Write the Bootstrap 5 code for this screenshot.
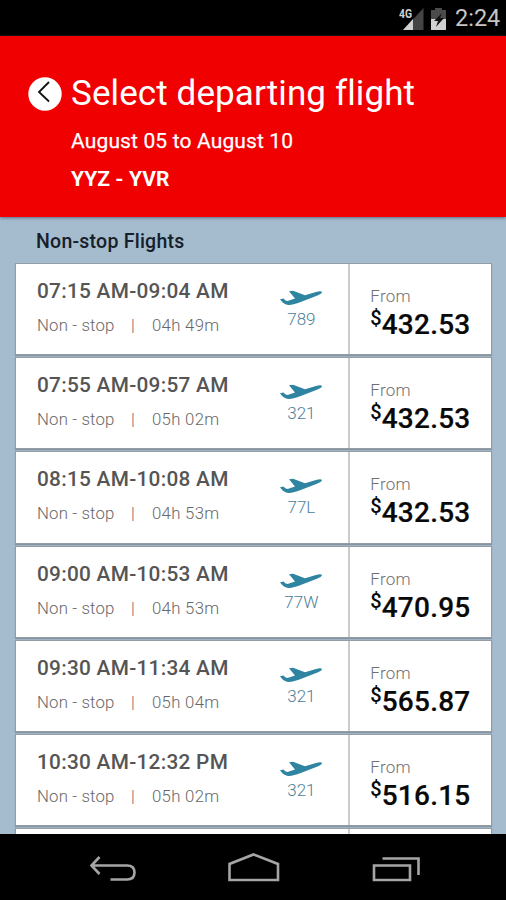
<!DOCTYPE html>
<html lang="en">
<head>
<meta charset="utf-8">
<meta name="viewport" content="width=device-width, initial-scale=1">
<title>Select departing flight</title>
<link href="https://cdn.jsdelivr.net/npm/bootstrap@5.3.0/dist/css/bootstrap.min.css" rel="stylesheet">
<style>
body{font-family:Roboto,"Liberation Sans",sans-serif;background:#a5bbce;width:506px;height:900px;overflow:hidden;line-height:1}
.status-bar{height:36px;background:#000;color:#c6c6c6;font-size:23.5px;padding:1px 8px 0 0}
.clock{width:43px;white-space:nowrap}
.app-head{height:181px;background:#f00000;box-shadow:0 1px 3px #5e6b80;padding:38px 0 0 28px;position:relative}
.back-btn{width:34px;height:34px;padding:0;border:0;background:none;margin:3px 9px 0 0}
.head-title{font-size:35px;line-height:40px;font-weight:400;margin:0;white-space:nowrap;letter-spacing:.1px}
.head-copy{padding-left:43px}
.head-dates{font-size:21px;line-height:24px;margin-top:15px;letter-spacing:.14px;-webkit-text-stroke:.25px #fff}
.head-route{font-size:21px;line-height:24px;margin-top:14px;font-weight:700;letter-spacing:.05px}
.results{height:617px;overflow:hidden;padding:0 14px 0 15px}
.group-name{font-size:19.5px;font-weight:500;color:#15202a;line-height:24px;padding:13px 0 0 21px;margin:0 0 9px;letter-spacing:.24px}
.flight{height:92.2px;margin-bottom:2px;border:1px solid #959da4;border-bottom-width:1.5px;border-radius:0;background:#fff;box-shadow:0 1px 1px #8693a0}
.times{font-size:20.8px;font-weight:500;color:#555;line-height:24px;padding-top:15px;white-space:nowrap;letter-spacing:.28px}
.stops{font-size:16.8px;color:#686868;line-height:20px;padding-top:12px;font-weight:300;white-space:nowrap;letter-spacing:.3px}
.kind{width:94px;letter-spacing:.15px}
.sep{width:21px}
.main-col{width:225px;padding-left:21px}
.plane-col{width:108px;padding-top:26px;color:#4d8199;font-size:17px;font-weight:300}
.plane-col span{line-height:18px;margin-left:14px;margin-top:4px}
.plane-col svg{margin-left:14px}
.fare-col{border-left:2px solid #c9cbcd;padding:22px 0 0 20px;width:143px}
.from{font-size:17px;line-height:20px;color:#707070;font-weight:300;letter-spacing:.3px}
.fare{font-size:28px;line-height:30px;font-weight:500;color:#090909;margin-top:4px;white-space:nowrap}
.amount{letter-spacing:.25px;-webkit-text-stroke:.2px #090909}
.fare .cur{font-size:20px;line-height:20px;margin-top:-2px}
.nav-keys{height:66px;background:#000}
.nav-keys svg{display:block}
</style>
<script src="https://cdn.jsdelivr.net/npm/bootstrap@5.3.0/dist/js/bootstrap.bundle.min.js"></script>
</head>
<body class="d-flex flex-column">
<svg class="d-none">
<symbol id="plane" viewBox="0 0 42 16"><path fill="#2f84a1" d="M0 9.2 3.500 8.500Q5 10.800 7.500 11L15 8.600 9 1.200 13 .8 25 5.300 36 2Q41 .7 42 2 42 3.600 37.500 5.600L22 11.500Q12 15.600 7 14.800 3 13.800 0 9.200Z"/></symbol>
</svg>
<div class="status-bar d-flex align-items-center justify-content-end flex-shrink-0">
<svg width="56" height="30" viewBox="0 0 56 30"><path fill="#444" d="M24.500 4v22H4Z"/><path fill="#d0d0d0" d="M14 15v11H4Z"/><text x="0" y="13.500" font-size="12" font-weight="700" fill="#d0d0d0" stroke="#000" stroke-width="2" paint-order="stroke" textLength="13" lengthAdjust="spacingAndGlyphs">4G</text><path fill="#4b4b4b" d="M32 6h4V4h7v2h4v10H32Z"/><path fill="#d0d0d0" d="M32 15h15v11H32Z"/><path fill="#111" d="m43 9-8 8h4l-2 6 8-9h-4l2-5Z"/></svg>
<span class="clock">2:24</span>
</div>
<header class="app-head text-white flex-shrink-0">
<div class="d-flex"><button class="back-btn" aria-label="Back"><svg class="d-block" width="34" height="34"><circle cx="17" cy="17" r="16.7" fill="#fff"/><path d="m21 5-10 10 10 9.5" fill="none" stroke="#111" stroke-width="1.8"/></svg></button><h1 class="head-title">Select departing flight</h1></div>
<div class="head-copy"><div class="head-dates">August 05 to August 10</div><div class="head-route">YYZ - YVR</div></div>
</header>
<main class="results flex-shrink-0">
<h2 class="group-name">Non-stop Flights</h2>
<div class="flight d-flex"><div class="main-col"><div class="times">07:15 AM-09:04 AM</div><div class="stops d-flex"><span class="kind">Non - stop</span><span class="sep">|</span><span class="dur">04h 49m</span></div></div><div class="plane-col d-flex flex-column align-items-center"><svg width="42" height="16"><use href="#plane"/></svg><span>789</span></div><div class="fare-col"><div class="from">From</div><div class="fare d-flex"><span class="cur">$</span><span class="amount">432.53</span></div></div></div>
<div class="flight d-flex"><div class="main-col"><div class="times">07:55 AM-09:57 AM</div><div class="stops d-flex"><span class="kind">Non - stop</span><span class="sep">|</span><span class="dur">05h 02m</span></div></div><div class="plane-col d-flex flex-column align-items-center"><svg width="42" height="16"><use href="#plane"/></svg><span>321</span></div><div class="fare-col"><div class="from">From</div><div class="fare d-flex"><span class="cur">$</span><span class="amount">432.53</span></div></div></div>
<div class="flight d-flex"><div class="main-col"><div class="times">08:15 AM-10:08 AM</div><div class="stops d-flex"><span class="kind">Non - stop</span><span class="sep">|</span><span class="dur">04h 53m</span></div></div><div class="plane-col d-flex flex-column align-items-center"><svg width="42" height="16"><use href="#plane"/></svg><span>77L</span></div><div class="fare-col"><div class="from">From</div><div class="fare d-flex"><span class="cur">$</span><span class="amount">432.53</span></div></div></div>
<div class="flight d-flex"><div class="main-col"><div class="times">09:00 AM-10:53 AM</div><div class="stops d-flex"><span class="kind">Non - stop</span><span class="sep">|</span><span class="dur">04h 53m</span></div></div><div class="plane-col d-flex flex-column align-items-center"><svg width="42" height="16"><use href="#plane"/></svg><span>77W</span></div><div class="fare-col"><div class="from">From</div><div class="fare d-flex"><span class="cur">$</span><span class="amount">470.95</span></div></div></div>
<div class="flight d-flex"><div class="main-col"><div class="times">09:30 AM-11:34 AM</div><div class="stops d-flex"><span class="kind">Non - stop</span><span class="sep">|</span><span class="dur">05h 04m</span></div></div><div class="plane-col d-flex flex-column align-items-center"><svg width="42" height="16"><use href="#plane"/></svg><span>321</span></div><div class="fare-col"><div class="from">From</div><div class="fare d-flex"><span class="cur">$</span><span class="amount">565.87</span></div></div></div>
<div class="flight d-flex"><div class="main-col"><div class="times">10:30 AM-12:32 PM</div><div class="stops d-flex"><span class="kind">Non - stop</span><span class="sep">|</span><span class="dur">05h 02m</span></div></div><div class="plane-col d-flex flex-column align-items-center"><svg width="42" height="16"><use href="#plane"/></svg><span>321</span></div><div class="fare-col"><div class="from">From</div><div class="fare d-flex"><span class="cur">$</span><span class="amount">516.15</span></div></div></div>
<div class="flight d-flex"><div class="main-col"></div><div class="plane-col"></div><div class="fare-col"></div></div>
</main>
<nav class="nav-keys flex-shrink-0"><svg width="506" height="66" fill="none" stroke="#a5a5a5" stroke-width="2.6"><path d="M99.5 23 91.5 31.5 99.5 40M92 31.5H127Q134.5 31.5 134.5 38.5T127 45.500H110.500M229.500 46V30L253.500 20.500 278 30V46ZM374 31.500H410V46H374ZM382.500 24.500H418.500V41"/></svg></nav>
</body>
</html>
